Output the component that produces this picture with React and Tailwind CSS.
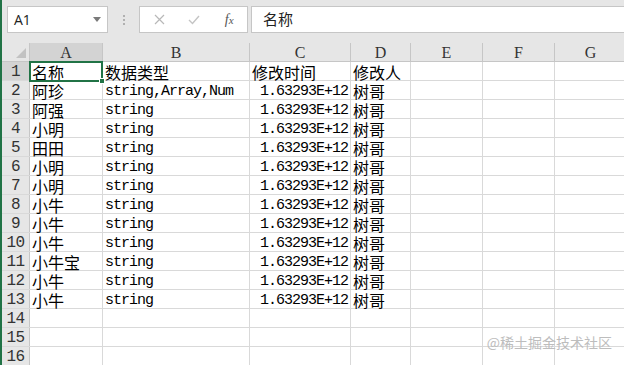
import React from "react";

const CN = "font-['Noto_Sans_CJK_SC',sans-serif]";
const MONO = "font-['Liberation_Mono',monospace] tracking-[-1px]";

const cols = [
  { k: "A", w: "w-[73px]" },
  { k: "B", w: "w-[147px]" },
  { k: "C", w: "w-[101px]" },
  { k: "D", w: "w-[60px]" },
  { k: "E", w: "w-[72px]" },
  { k: "F", w: "w-[72px]" },
  { k: "G", w: "w-[72px]" },
];

const names = ["阿珍", "阿强", "小明", "田田", "小明", "小明", "小牛", "小牛", "小牛", "小牛宝", "小牛", "小牛"];

const rows = [
  [
    { t: "名称", cn: true },
    { t: "数据类型", cn: true },
    { t: "修改时间", cn: true },
    { t: "修改人", cn: true },
  ],
  ...names.map((n, i) => [
    { t: n, cn: true },
    { t: i === 0 ? "string,Array,Num" : "string" },
    { t: "1.63293E+12", right: true },
    { t: "树哥", cn: true },
  ]),
  [],
  [],
  [],
];

function Cell({ col, cell, selected }) {
  return (
    <div
      className={`relative ${col.w} shrink-0 h-full border-r border-[#d9d9d9] flex items-center ${
        cell && cell.right ? "justify-end pr-[2px]" : "pl-[2px]"
      }`}
    >
      {cell && (
        <span
          className={`block whitespace-nowrap leading-[18px] text-black ${
            cell.cn ? `${CN} text-[16px] translate-y-[1px]` : `${MONO} text-[15px] translate-y-[2px]`
          }`}
        >
          {cell.t}
        </span>
      )}
      {selected && (
        <div className="absolute -left-[1px] -top-[1px] w-[74px] h-[21px] border-2 border-[#217346] z-10">
          <div className="absolute -right-[4px] -bottom-[4px] w-[6px] h-[6px] bg-[#217346] border border-white" />
        </div>
      )}
    </div>
  );
}

export default function App() {
  return (
    <div className="relative w-[624px] h-[365px] overflow-hidden bg-white border-l-2 border-[#217346]">
      {/* Formula bar */}
      <div className="h-[43px] bg-[#e6e6e6] flex items-start pt-[6px]">
        <div className="ml-[5px] w-[101px] h-[27px] bg-white border border-[#c6c6c6] flex items-center pl-[6px] pr-[6px]">
          <span className="font-['Open_Sans',sans-serif] text-[14px] text-[#222] flex-1">A1</span>
          <svg width="8" height="5" viewBox="0 0 8 5">
            <path d="M0 0 L8 0 L4 5 Z" fill="#7a7a7a" />
          </svg>
        </div>
        <div className="w-[31px] h-[27px] flex flex-col items-center justify-center gap-[2px]">
          <div className="w-[2px] h-[2px] bg-[#b0b0b0]" />
          <div className="w-[2px] h-[2px] bg-[#b0b0b0]" />
          <div className="w-[2px] h-[2px] bg-[#b0b0b0]" />
        </div>
        <div className="w-[109px] h-[27px] bg-white border border-[#c6c6c6] flex items-center">
          <div className="w-[36px] flex justify-center pl-[3px]">
            <svg width="11" height="11" viewBox="0 0 11 11">
              <path d="M1 1 L10 10 M10 1 L1 10" stroke="#b8b8b8" strokeWidth="1.2" />
            </svg>
          </div>
          <div className="w-[36px] flex justify-center">
            <svg width="12" height="10" viewBox="0 0 12 10">
              <path d="M1 5 L4.5 8.5 L11 1" stroke="#c4c4c4" strokeWidth="1.4" fill="none" />
            </svg>
          </div>
          <div className="w-[36px] flex justify-center">
            <span className="font-['Liberation_Serif',serif] italic text-[14px] text-[#555] leading-none">
              f<span className="text-[11px]">x</span>
            </span>
          </div>
        </div>
        <div className="ml-[3px] flex-1 h-[27px] bg-white border border-[#c6c6c6] border-r-0 flex items-center pl-[11px]">
          <span className={`${CN} text-[15px] text-[#222]`}>名称</span>
        </div>
      </div>

      {/* Column header row */}
      <div className="flex h-[19px] bg-[#e6e6e6] border-b border-[#c6c6c6]">
        <div className="relative w-[28px] shrink-0 h-full border-r border-[#c6c6c6]">
          <svg className="absolute right-[3px] bottom-[3px]" width="10" height="10" viewBox="0 0 10 10">
            <path d="M10 0 L10 10 L0 10 Z" fill="#c2c2c2" />
          </svg>
        </div>
        {cols.map((c) => (
          <div
            key={c.k}
            className={`${c.w} shrink-0 h-full border-r border-[#c6c6c6] flex items-center justify-center ${
              c.k === "A" ? "bg-[#d3d3d3]" : ""
            }`}
          >
            <span className="font-['Liberation_Serif',serif] text-[16px] text-[#333] leading-none pt-[1px]">{c.k}</span>
          </div>
        ))}
      </div>

      {/* Rows */}
      {rows.map((r, i) => (
        <div key={i} className="flex h-[19px] border-b border-[#d9d9d9]">
          <div
            className={`w-[28px] shrink-0 h-full border-r border-[#c6c6c6] flex items-center justify-center ${
              i === 0 ? "bg-[#d3d3d3]" : "bg-[#e6e6e6]"
            }`}
          >
            <span className="font-['Liberation_Mono',monospace] text-[16px] tracking-[-0.5px] text-[#333] leading-none pt-[2px]">
              {i + 1}
            </span>
          </div>
          {cols.map((c, j) => (
            <Cell key={c.k} col={c} cell={r[j]} selected={i === 0 && j === 0} />
          ))}
        </div>
      ))}

      {/* Watermark */}
      <div className={`absolute right-[12px] bottom-[12px] ${CN} text-[14px] text-[#bdbdbd] whitespace-nowrap`}>
        @稀土掘金技术社区
      </div>
    </div>
  );
}
